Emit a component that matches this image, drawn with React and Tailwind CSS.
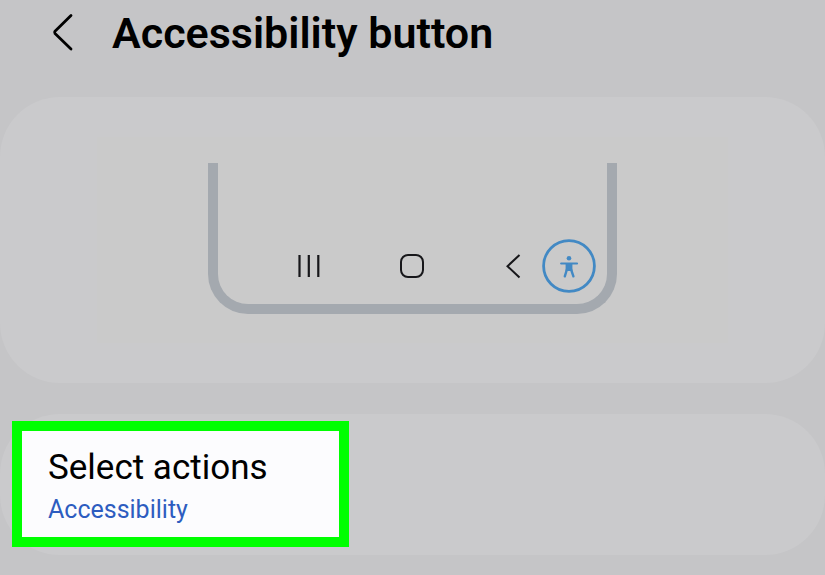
function AccessibilityFigure() {
  return (
    <svg viewBox="0 0 54 54" className="size-[54px] text-[#4289c4]" fill="none" stroke="currentColor" aria-hidden="true">
      <circle cx="27" cy="27" r="25.4" strokeWidth="2.8" />
      <circle cx="27" cy="19.2" r="2.3" fill="currentColor" stroke="none" />
      <path d="M19.2 24.5H35" strokeWidth="2.2" strokeLinecap="round" />
      <path d="M23.6 24.5h6.8v7.6h-6.8z" fill="currentColor" stroke="none" />
      <path d="M24.9 30.5l-2.1 6.8M29.1 30.5l2.3 6.8" strokeWidth="2.4" strokeLinecap="round" />
    </svg>
  );
}

function NavigationPreview() {
  return (
    <div
      role="img"
      aria-label="Navigation bar with the Accessibility button at the right"
      className="flex h-[151px] w-[409px] items-end rounded-b-[40px] border-x-10 border-b-10 border-[#a4a9af] pr-[11px] pb-[11px] pl-[78px] text-[#17171a]"
    >
      <div className="flex flex-1 items-center">
        <svg viewBox="0 0 26 26" className="size-[26px]" stroke="currentColor" strokeWidth="2.2" aria-hidden="true">
          <path d="M3.5 2v22M12.8 2v22M22.3 2v22" />
        </svg>
        <svg viewBox="0 0 26 26" className="ml-[77px] size-[26px]" fill="none" stroke="currentColor" strokeWidth="2" aria-hidden="true">
          <rect x="2" y="2" width="22" height="22" rx="7" />
        </svg>
        <svg viewBox="0 0 26 26" className="mr-auto ml-[78px] size-[26px]" fill="none" stroke="currentColor" strokeWidth="2" aria-hidden="true">
          <path d="M16.5 2 4.5 13.2 16.5 24.5" />
        </svg>
        <AccessibilityFigure />
      </div>
    </div>
  );
}

export default function App() {
  return (
    <main className="min-h-screen bg-[#c5c5c7] font-['Roboto',sans-serif]">
      <header className="flex h-[97px] items-start gap-[28px] pt-[9px] pl-[40px]">
        <button type="button" aria-label="Back" className="mt-[2px] text-black">
          <svg viewBox="0 0 44 44" className="size-[44px]" fill="none" stroke="currentColor" strokeWidth="2.8" strokeLinecap="round" strokeLinejoin="round" aria-hidden="true">
            <path d="M31 4.5 15 20.2q-1 1.2 0 2.4L31 38" />
          </svg>
        </button>
        <h1 className="text-[43px] leading-[48px] font-semibold text-black">Accessibility button</h1>
      </header>

      <section className="rounded-[60px] bg-[#cacacc] px-[97px] py-10">
        <div className="flex h-[206px] justify-center bg-[#cacaca] pt-[26px]">
          <NavigationPreview />
        </div>
      </section>

      <section className="mt-[31px] rounded-[60px] bg-[#cacacc] px-3 pt-[7px] pb-2">
        <button
          type="button"
          className="flex h-[126px] w-[337px] flex-col items-start justify-center border-10 border-[#00ff00] bg-[#fcfcfe] pt-[8px] pl-[26px] text-left"
        >
          <span className="text-[35px] leading-[44px] text-black">Select actions</span>
          <span className="text-[25px] leading-[40px] text-[#2d5cc0]">Accessibility</span>
        </button>
      </section>
    </main>
  );
}
